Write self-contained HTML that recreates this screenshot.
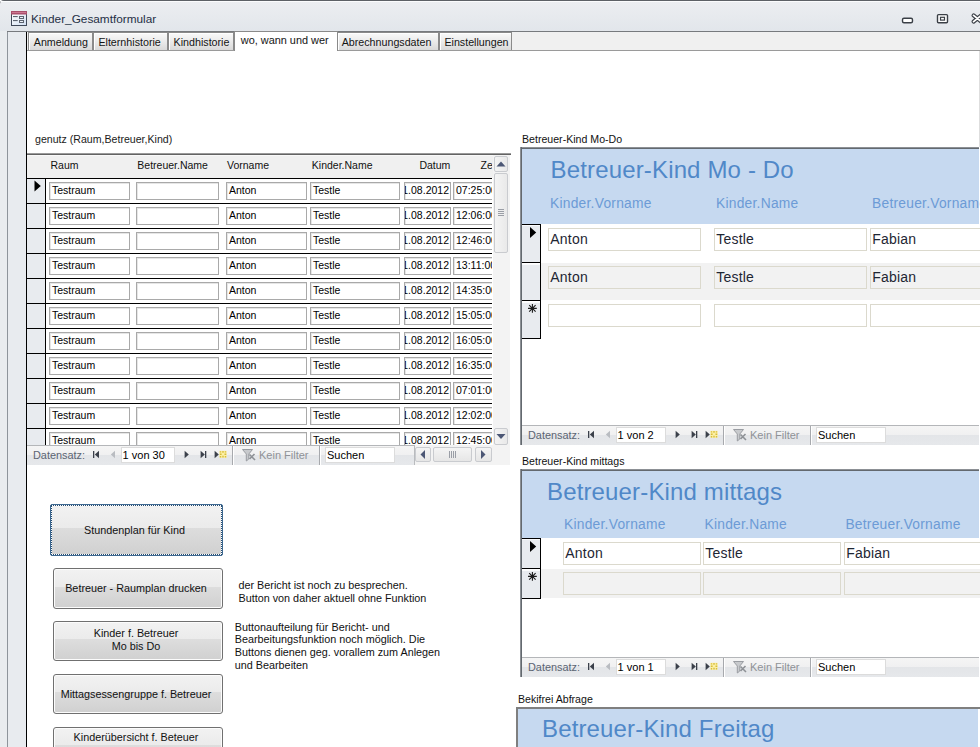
<!DOCTYPE html><html><head><meta charset="utf-8"><style>
html,body{margin:0;padding:0;}
body{width:980px;height:747px;overflow:hidden;position:relative;background:#fff;font-family:"Liberation Sans", sans-serif;}
div{box-sizing:border-box;}
</style></head><body>
<div style="position:absolute;left:0px;top:0px;width:980px;height:31px;background:linear-gradient(#eceef1,#e2e6eb);border-top:1px solid #5d6166;border-top-left-radius:4px;"></div>
<div style="position:absolute;left:1px;top:1px;width:979px;height:1px;background:#fbfcfd;"></div>
<svg style="position:absolute;left:11px;top:11px" width="16" height="15" viewBox="0 0 16 15">
<defs><linearGradient id="ib" x1="0" y1="0" x2="1" y2="1"><stop offset="0" stop-color="#ffffff"/><stop offset="1" stop-color="#d3e0f2"/></linearGradient>
<linearGradient id="ip" x1="0" y1="0" x2="0" y2="1"><stop offset="0" stop-color="#e79ab3"/><stop offset="1" stop-color="#a3415f"/></linearGradient></defs>
<rect x="0.5" y="0.5" width="15" height="14" fill="url(#ib)" stroke="#414a5a"/>
<rect x="0.5" y="0.5" width="15" height="2.5" fill="url(#ip)" stroke="#a8506c" stroke-width="1"/>
<rect x="2" y="5" width="4.7" height="1.1" fill="#5d6470"/>
<rect x="2" y="9" width="4.7" height="1.1" fill="#5d6470"/>
<rect x="8.5" y="5.5" width="4" height="2" fill="#eef3fa" stroke="#5d6470" stroke-width="1"/>
<rect x="8.5" y="9.5" width="4" height="2" fill="#eef3fa" stroke="#5d6470" stroke-width="1"/>
</svg>
<div style="position:absolute;left:31px;top:12px;font-size:11.8px;line-height:11.8px;color:#1f2f45;white-space:pre;line-height:14px;">Kinder_Gesamtformular</div>
<svg style="position:absolute;left:895px;top:8px" width="85" height="20" viewBox="0 0 85 20" style="overflow:hidden">
<rect x="7.5" y="10.3" width="10" height="4.4" rx="1.5" fill="#fff" stroke="#3a3f46" stroke-width="1.4"/>
<rect x="42.5" y="6.6" width="10" height="8.2" rx="1" fill="#fff" stroke="#3a3f46" stroke-width="1.4"/>
<rect x="45.5" y="9.3" width="4" height="2.8" fill="#fff" stroke="#3a3f46" stroke-width="1.2"/>
<path d="M78.6 7.4 L86.2 13.6 M78.6 13.6 L86.2 7.4" stroke="#3a3f46" stroke-width="4" stroke-linecap="round"/>
<path d="M78.6 7.4 L86.2 13.6 M78.6 13.6 L86.2 7.4" stroke="#fff" stroke-width="1.8" stroke-linecap="round"/>
</svg>
<div style="position:absolute;left:7px;top:31px;width:973px;height:1px;background:#777a7e;"></div>
<div style="position:absolute;left:0px;top:31px;width:7px;height:716px;background:#e9ecef;"></div>
<div style="position:absolute;left:7px;top:32px;width:1px;height:715px;background:#8e949b;"></div>
<div style="position:absolute;left:8px;top:32px;width:18px;height:715px;background:#e8ebef;"></div>
<div style="position:absolute;left:26px;top:32px;width:1px;height:715px;background:#000;"></div>
<div style="position:absolute;left:27px;top:32px;width:953px;height:18px;background:#f0f0f0;"></div>
<div style="position:absolute;left:27px;top:50px;width:953px;height:1px;background:#9a9a9a;"></div>
<div style="position:absolute;left:28px;top:32px;width:65px;height:18px;border:1px solid #8a8a8a;border-bottom:none;background:linear-gradient(#f9f9f9,#e9e9e9 55%,#d9d9d9);box-shadow:inset 1px 1px 0 #fff;"></div>
<div style="position:absolute;left:33.8px;top:36.84px;font-size:10.7px;line-height:10.7px;color:#141414;white-space:pre;">Anmeldung</div>
<div style="position:absolute;left:93px;top:32px;width:75px;height:18px;border:1px solid #8a8a8a;border-bottom:none;background:linear-gradient(#f9f9f9,#e9e9e9 55%,#d9d9d9);box-shadow:inset 1px 1px 0 #fff;"></div>
<div style="position:absolute;left:98.4px;top:36.84px;font-size:10.7px;line-height:10.7px;color:#141414;white-space:pre;">Elternhistorie</div>
<div style="position:absolute;left:168px;top:32px;width:66px;height:18px;border:1px solid #8a8a8a;border-bottom:none;background:linear-gradient(#f9f9f9,#e9e9e9 55%,#d9d9d9);box-shadow:inset 1px 1px 0 #fff;"></div>
<div style="position:absolute;left:173.6px;top:36.84px;font-size:10.7px;line-height:10.7px;color:#141414;white-space:pre;">Kindhistorie</div>
<div style="position:absolute;left:337px;top:32px;width:102px;height:18px;border:1px solid #8a8a8a;border-bottom:none;background:linear-gradient(#f9f9f9,#e9e9e9 55%,#d9d9d9);box-shadow:inset 1px 1px 0 #fff;"></div>
<div style="position:absolute;left:341.7px;top:36.84px;font-size:10.7px;line-height:10.7px;color:#141414;white-space:pre;">Abrechnungsdaten</div>
<div style="position:absolute;left:439px;top:32px;width:73px;height:18px;border:1px solid #8a8a8a;border-bottom:none;background:linear-gradient(#f9f9f9,#e9e9e9 55%,#d9d9d9);box-shadow:inset 1px 1px 0 #fff;"></div>
<div style="position:absolute;left:444.4px;top:36.84px;font-size:10.7px;line-height:10.7px;color:#141414;white-space:pre;">Einstellungen</div>
<div style="position:absolute;left:234px;top:31px;width:104px;height:20px;border:1px solid #8a8a8a;border-bottom:none;background:#fff;"></div>
<div style="position:absolute;left:240.8px;top:34.77px;font-size:10.9px;line-height:10.9px;color:#141414;white-space:pre;">wo, wann und wer</div>
<div style="position:absolute;left:35px;top:134.03px;font-size:10.6px;line-height:10.6px;color:#1a1a1a;white-space:pre;">genutz (Raum,Betreuer,Kind)</div>
<div style="position:absolute;left:27px;top:153px;width:484px;height:1px;background:#9a9a9a;"></div>
<div style="position:absolute;left:27px;top:154px;width:484px;height:1px;background:#636363;"></div>
<div style="position:absolute;left:27px;top:155px;width:466px;height:23px;background:#f0f0f0;border-top:1px solid #f9f9f9;"></div>
<div style="position:absolute;left:27px;top:155px;width:465px;height:290px;overflow:hidden;">
<div style="position:absolute;left:23.5px;top:4.81px;font-size:10.5px;line-height:10.5px;color:#111;white-space:pre;">Raum</div>
<div style="position:absolute;left:110.30000000000001px;top:4.81px;font-size:10.5px;line-height:10.5px;color:#111;white-space:pre;">Betreuer.Name</div>
<div style="position:absolute;left:200px;top:4.81px;font-size:10.5px;line-height:10.5px;color:#111;white-space:pre;">Vorname</div>
<div style="position:absolute;left:284.8px;top:4.81px;font-size:10.5px;line-height:10.5px;color:#111;white-space:pre;">Kinder.Name</div>
<div style="position:absolute;left:392.4px;top:4.81px;font-size:10.5px;line-height:10.5px;color:#111;white-space:pre;">Datum</div>
<div style="position:absolute;left:453.6px;top:4.81px;font-size:10.5px;line-height:10.5px;color:#111;white-space:pre;">Zeit</div>
<div style="position:absolute;left:0px;top:23px;width:465px;height:1px;background:#000;"></div>
<div style="position:absolute;left:18px;top:24px;width:447px;height:24px;background:#fff;"></div>
<div style="position:absolute;left:0px;top:24px;width:18px;height:24px;background:#e8ebef;"></div>
<div style="position:absolute;left:18px;top:24px;width:1px;height:24px;background:#000;"></div>
<div style="position:absolute;left:22px;top:27px;width:81px;height:18px;border:1px solid #a9a9a9;box-shadow:inset 1px 1px 0 #e6e6e6;background:#fff;overflow:hidden;">
<div style="position:absolute;left:2px;top:1.81px;font-size:10.5px;line-height:10.5px;color:#000;white-space:pre;">Testraum</div>
</div>
<div style="position:absolute;left:109px;top:27px;width:83px;height:18px;border:1px solid #a9a9a9;box-shadow:inset 1px 1px 0 #e6e6e6;background:#fff;overflow:hidden;">
</div>
<div style="position:absolute;left:199px;top:27px;width:81px;height:18px;border:1px solid #a9a9a9;box-shadow:inset 1px 1px 0 #e6e6e6;background:#fff;overflow:hidden;">
<div style="position:absolute;left:2px;top:1.81px;font-size:10.5px;line-height:10.5px;color:#000;white-space:pre;">Anton</div>
</div>
<div style="position:absolute;left:283px;top:27px;width:90px;height:18px;border:1px solid #a9a9a9;box-shadow:inset 1px 1px 0 #e6e6e6;background:#fff;overflow:hidden;">
<div style="position:absolute;left:2px;top:1.81px;font-size:10.5px;line-height:10.5px;color:#000;white-space:pre;">Testle</div>
</div>
<div style="position:absolute;left:377px;top:27px;width:47px;height:18px;border:1px solid #a9a9a9;box-shadow:inset 1px 1px 0 #e6e6e6;background:#fff;overflow:hidden;">
<div style="position:absolute;right:1px;top:1.81px;font-size:10.5px;line-height:10.5px;color:#000;white-space:pre;">01.08.2012</div>
</div>
<div style="position:absolute;left:426px;top:27px;width:68px;height:18px;border:1px solid #a9a9a9;box-shadow:inset 1px 1px 0 #e6e6e6;background:#fff;overflow:hidden;">
<div style="position:absolute;left:2px;top:1.81px;font-size:10.5px;line-height:10.5px;color:#000;white-space:pre;">07:25:00</div>
</div>
<div style="position:absolute;left:0px;top:48px;width:465px;height:1px;background:#000;"></div>
<div style="position:absolute;left:18px;top:49px;width:447px;height:24px;background:#fff;"></div>
<div style="position:absolute;left:0px;top:49px;width:18px;height:24px;background:#e8ebef;"></div>
<div style="position:absolute;left:18px;top:49px;width:1px;height:24px;background:#000;"></div>
<div style="position:absolute;left:22px;top:52px;width:81px;height:18px;border:1px solid #a9a9a9;box-shadow:inset 1px 1px 0 #e6e6e6;background:#fff;overflow:hidden;">
<div style="position:absolute;left:2px;top:1.81px;font-size:10.5px;line-height:10.5px;color:#000;white-space:pre;">Testraum</div>
</div>
<div style="position:absolute;left:109px;top:52px;width:83px;height:18px;border:1px solid #a9a9a9;box-shadow:inset 1px 1px 0 #e6e6e6;background:#fff;overflow:hidden;">
</div>
<div style="position:absolute;left:199px;top:52px;width:81px;height:18px;border:1px solid #a9a9a9;box-shadow:inset 1px 1px 0 #e6e6e6;background:#fff;overflow:hidden;">
<div style="position:absolute;left:2px;top:1.81px;font-size:10.5px;line-height:10.5px;color:#000;white-space:pre;">Anton</div>
</div>
<div style="position:absolute;left:283px;top:52px;width:90px;height:18px;border:1px solid #a9a9a9;box-shadow:inset 1px 1px 0 #e6e6e6;background:#fff;overflow:hidden;">
<div style="position:absolute;left:2px;top:1.81px;font-size:10.5px;line-height:10.5px;color:#000;white-space:pre;">Testle</div>
</div>
<div style="position:absolute;left:377px;top:52px;width:47px;height:18px;border:1px solid #a9a9a9;box-shadow:inset 1px 1px 0 #e6e6e6;background:#fff;overflow:hidden;">
<div style="position:absolute;right:1px;top:1.81px;font-size:10.5px;line-height:10.5px;color:#000;white-space:pre;">01.08.2012</div>
</div>
<div style="position:absolute;left:426px;top:52px;width:68px;height:18px;border:1px solid #a9a9a9;box-shadow:inset 1px 1px 0 #e6e6e6;background:#fff;overflow:hidden;">
<div style="position:absolute;left:2px;top:1.81px;font-size:10.5px;line-height:10.5px;color:#000;white-space:pre;">12:06:00</div>
</div>
<div style="position:absolute;left:0px;top:73px;width:465px;height:1px;background:#000;"></div>
<div style="position:absolute;left:18px;top:74px;width:447px;height:24px;background:#fff;"></div>
<div style="position:absolute;left:0px;top:74px;width:18px;height:24px;background:#e8ebef;"></div>
<div style="position:absolute;left:18px;top:74px;width:1px;height:24px;background:#000;"></div>
<div style="position:absolute;left:22px;top:77px;width:81px;height:18px;border:1px solid #a9a9a9;box-shadow:inset 1px 1px 0 #e6e6e6;background:#fff;overflow:hidden;">
<div style="position:absolute;left:2px;top:1.81px;font-size:10.5px;line-height:10.5px;color:#000;white-space:pre;">Testraum</div>
</div>
<div style="position:absolute;left:109px;top:77px;width:83px;height:18px;border:1px solid #a9a9a9;box-shadow:inset 1px 1px 0 #e6e6e6;background:#fff;overflow:hidden;">
</div>
<div style="position:absolute;left:199px;top:77px;width:81px;height:18px;border:1px solid #a9a9a9;box-shadow:inset 1px 1px 0 #e6e6e6;background:#fff;overflow:hidden;">
<div style="position:absolute;left:2px;top:1.81px;font-size:10.5px;line-height:10.5px;color:#000;white-space:pre;">Anton</div>
</div>
<div style="position:absolute;left:283px;top:77px;width:90px;height:18px;border:1px solid #a9a9a9;box-shadow:inset 1px 1px 0 #e6e6e6;background:#fff;overflow:hidden;">
<div style="position:absolute;left:2px;top:1.81px;font-size:10.5px;line-height:10.5px;color:#000;white-space:pre;">Testle</div>
</div>
<div style="position:absolute;left:377px;top:77px;width:47px;height:18px;border:1px solid #a9a9a9;box-shadow:inset 1px 1px 0 #e6e6e6;background:#fff;overflow:hidden;">
<div style="position:absolute;right:1px;top:1.81px;font-size:10.5px;line-height:10.5px;color:#000;white-space:pre;">01.08.2012</div>
</div>
<div style="position:absolute;left:426px;top:77px;width:68px;height:18px;border:1px solid #a9a9a9;box-shadow:inset 1px 1px 0 #e6e6e6;background:#fff;overflow:hidden;">
<div style="position:absolute;left:2px;top:1.81px;font-size:10.5px;line-height:10.5px;color:#000;white-space:pre;">12:46:00</div>
</div>
<div style="position:absolute;left:0px;top:98px;width:465px;height:1px;background:#000;"></div>
<div style="position:absolute;left:18px;top:99px;width:447px;height:24px;background:#fff;"></div>
<div style="position:absolute;left:0px;top:99px;width:18px;height:24px;background:#e8ebef;"></div>
<div style="position:absolute;left:18px;top:99px;width:1px;height:24px;background:#000;"></div>
<div style="position:absolute;left:22px;top:102px;width:81px;height:18px;border:1px solid #a9a9a9;box-shadow:inset 1px 1px 0 #e6e6e6;background:#fff;overflow:hidden;">
<div style="position:absolute;left:2px;top:1.81px;font-size:10.5px;line-height:10.5px;color:#000;white-space:pre;">Testraum</div>
</div>
<div style="position:absolute;left:109px;top:102px;width:83px;height:18px;border:1px solid #a9a9a9;box-shadow:inset 1px 1px 0 #e6e6e6;background:#fff;overflow:hidden;">
</div>
<div style="position:absolute;left:199px;top:102px;width:81px;height:18px;border:1px solid #a9a9a9;box-shadow:inset 1px 1px 0 #e6e6e6;background:#fff;overflow:hidden;">
<div style="position:absolute;left:2px;top:1.81px;font-size:10.5px;line-height:10.5px;color:#000;white-space:pre;">Anton</div>
</div>
<div style="position:absolute;left:283px;top:102px;width:90px;height:18px;border:1px solid #a9a9a9;box-shadow:inset 1px 1px 0 #e6e6e6;background:#fff;overflow:hidden;">
<div style="position:absolute;left:2px;top:1.81px;font-size:10.5px;line-height:10.5px;color:#000;white-space:pre;">Testle</div>
</div>
<div style="position:absolute;left:377px;top:102px;width:47px;height:18px;border:1px solid #a9a9a9;box-shadow:inset 1px 1px 0 #e6e6e6;background:#fff;overflow:hidden;">
<div style="position:absolute;right:1px;top:1.81px;font-size:10.5px;line-height:10.5px;color:#000;white-space:pre;">01.08.2012</div>
</div>
<div style="position:absolute;left:426px;top:102px;width:68px;height:18px;border:1px solid #a9a9a9;box-shadow:inset 1px 1px 0 #e6e6e6;background:#fff;overflow:hidden;">
<div style="position:absolute;left:2px;top:1.81px;font-size:10.5px;line-height:10.5px;color:#000;white-space:pre;">13:11:00</div>
</div>
<div style="position:absolute;left:0px;top:123px;width:465px;height:1px;background:#000;"></div>
<div style="position:absolute;left:18px;top:124px;width:447px;height:24px;background:#fff;"></div>
<div style="position:absolute;left:0px;top:124px;width:18px;height:24px;background:#e8ebef;"></div>
<div style="position:absolute;left:18px;top:124px;width:1px;height:24px;background:#000;"></div>
<div style="position:absolute;left:22px;top:127px;width:81px;height:18px;border:1px solid #a9a9a9;box-shadow:inset 1px 1px 0 #e6e6e6;background:#fff;overflow:hidden;">
<div style="position:absolute;left:2px;top:1.81px;font-size:10.5px;line-height:10.5px;color:#000;white-space:pre;">Testraum</div>
</div>
<div style="position:absolute;left:109px;top:127px;width:83px;height:18px;border:1px solid #a9a9a9;box-shadow:inset 1px 1px 0 #e6e6e6;background:#fff;overflow:hidden;">
</div>
<div style="position:absolute;left:199px;top:127px;width:81px;height:18px;border:1px solid #a9a9a9;box-shadow:inset 1px 1px 0 #e6e6e6;background:#fff;overflow:hidden;">
<div style="position:absolute;left:2px;top:1.81px;font-size:10.5px;line-height:10.5px;color:#000;white-space:pre;">Anton</div>
</div>
<div style="position:absolute;left:283px;top:127px;width:90px;height:18px;border:1px solid #a9a9a9;box-shadow:inset 1px 1px 0 #e6e6e6;background:#fff;overflow:hidden;">
<div style="position:absolute;left:2px;top:1.81px;font-size:10.5px;line-height:10.5px;color:#000;white-space:pre;">Testle</div>
</div>
<div style="position:absolute;left:377px;top:127px;width:47px;height:18px;border:1px solid #a9a9a9;box-shadow:inset 1px 1px 0 #e6e6e6;background:#fff;overflow:hidden;">
<div style="position:absolute;right:1px;top:1.81px;font-size:10.5px;line-height:10.5px;color:#000;white-space:pre;">01.08.2012</div>
</div>
<div style="position:absolute;left:426px;top:127px;width:68px;height:18px;border:1px solid #a9a9a9;box-shadow:inset 1px 1px 0 #e6e6e6;background:#fff;overflow:hidden;">
<div style="position:absolute;left:2px;top:1.81px;font-size:10.5px;line-height:10.5px;color:#000;white-space:pre;">14:35:00</div>
</div>
<div style="position:absolute;left:0px;top:148px;width:465px;height:1px;background:#000;"></div>
<div style="position:absolute;left:18px;top:149px;width:447px;height:24px;background:#fff;"></div>
<div style="position:absolute;left:0px;top:149px;width:18px;height:24px;background:#e8ebef;"></div>
<div style="position:absolute;left:18px;top:149px;width:1px;height:24px;background:#000;"></div>
<div style="position:absolute;left:22px;top:152px;width:81px;height:18px;border:1px solid #a9a9a9;box-shadow:inset 1px 1px 0 #e6e6e6;background:#fff;overflow:hidden;">
<div style="position:absolute;left:2px;top:1.81px;font-size:10.5px;line-height:10.5px;color:#000;white-space:pre;">Testraum</div>
</div>
<div style="position:absolute;left:109px;top:152px;width:83px;height:18px;border:1px solid #a9a9a9;box-shadow:inset 1px 1px 0 #e6e6e6;background:#fff;overflow:hidden;">
</div>
<div style="position:absolute;left:199px;top:152px;width:81px;height:18px;border:1px solid #a9a9a9;box-shadow:inset 1px 1px 0 #e6e6e6;background:#fff;overflow:hidden;">
<div style="position:absolute;left:2px;top:1.81px;font-size:10.5px;line-height:10.5px;color:#000;white-space:pre;">Anton</div>
</div>
<div style="position:absolute;left:283px;top:152px;width:90px;height:18px;border:1px solid #a9a9a9;box-shadow:inset 1px 1px 0 #e6e6e6;background:#fff;overflow:hidden;">
<div style="position:absolute;left:2px;top:1.81px;font-size:10.5px;line-height:10.5px;color:#000;white-space:pre;">Testle</div>
</div>
<div style="position:absolute;left:377px;top:152px;width:47px;height:18px;border:1px solid #a9a9a9;box-shadow:inset 1px 1px 0 #e6e6e6;background:#fff;overflow:hidden;">
<div style="position:absolute;right:1px;top:1.81px;font-size:10.5px;line-height:10.5px;color:#000;white-space:pre;">01.08.2012</div>
</div>
<div style="position:absolute;left:426px;top:152px;width:68px;height:18px;border:1px solid #a9a9a9;box-shadow:inset 1px 1px 0 #e6e6e6;background:#fff;overflow:hidden;">
<div style="position:absolute;left:2px;top:1.81px;font-size:10.5px;line-height:10.5px;color:#000;white-space:pre;">15:05:00</div>
</div>
<div style="position:absolute;left:0px;top:173px;width:465px;height:1px;background:#000;"></div>
<div style="position:absolute;left:18px;top:174px;width:447px;height:24px;background:#fff;"></div>
<div style="position:absolute;left:0px;top:174px;width:18px;height:24px;background:#e8ebef;"></div>
<div style="position:absolute;left:18px;top:174px;width:1px;height:24px;background:#000;"></div>
<div style="position:absolute;left:22px;top:177px;width:81px;height:18px;border:1px solid #a9a9a9;box-shadow:inset 1px 1px 0 #e6e6e6;background:#fff;overflow:hidden;">
<div style="position:absolute;left:2px;top:1.81px;font-size:10.5px;line-height:10.5px;color:#000;white-space:pre;">Testraum</div>
</div>
<div style="position:absolute;left:109px;top:177px;width:83px;height:18px;border:1px solid #a9a9a9;box-shadow:inset 1px 1px 0 #e6e6e6;background:#fff;overflow:hidden;">
</div>
<div style="position:absolute;left:199px;top:177px;width:81px;height:18px;border:1px solid #a9a9a9;box-shadow:inset 1px 1px 0 #e6e6e6;background:#fff;overflow:hidden;">
<div style="position:absolute;left:2px;top:1.81px;font-size:10.5px;line-height:10.5px;color:#000;white-space:pre;">Anton</div>
</div>
<div style="position:absolute;left:283px;top:177px;width:90px;height:18px;border:1px solid #a9a9a9;box-shadow:inset 1px 1px 0 #e6e6e6;background:#fff;overflow:hidden;">
<div style="position:absolute;left:2px;top:1.81px;font-size:10.5px;line-height:10.5px;color:#000;white-space:pre;">Testle</div>
</div>
<div style="position:absolute;left:377px;top:177px;width:47px;height:18px;border:1px solid #a9a9a9;box-shadow:inset 1px 1px 0 #e6e6e6;background:#fff;overflow:hidden;">
<div style="position:absolute;right:1px;top:1.81px;font-size:10.5px;line-height:10.5px;color:#000;white-space:pre;">01.08.2012</div>
</div>
<div style="position:absolute;left:426px;top:177px;width:68px;height:18px;border:1px solid #a9a9a9;box-shadow:inset 1px 1px 0 #e6e6e6;background:#fff;overflow:hidden;">
<div style="position:absolute;left:2px;top:1.81px;font-size:10.5px;line-height:10.5px;color:#000;white-space:pre;">16:05:00</div>
</div>
<div style="position:absolute;left:0px;top:198px;width:465px;height:1px;background:#000;"></div>
<div style="position:absolute;left:18px;top:199px;width:447px;height:24px;background:#fff;"></div>
<div style="position:absolute;left:0px;top:199px;width:18px;height:24px;background:#e8ebef;"></div>
<div style="position:absolute;left:18px;top:199px;width:1px;height:24px;background:#000;"></div>
<div style="position:absolute;left:22px;top:202px;width:81px;height:18px;border:1px solid #a9a9a9;box-shadow:inset 1px 1px 0 #e6e6e6;background:#fff;overflow:hidden;">
<div style="position:absolute;left:2px;top:1.81px;font-size:10.5px;line-height:10.5px;color:#000;white-space:pre;">Testraum</div>
</div>
<div style="position:absolute;left:109px;top:202px;width:83px;height:18px;border:1px solid #a9a9a9;box-shadow:inset 1px 1px 0 #e6e6e6;background:#fff;overflow:hidden;">
</div>
<div style="position:absolute;left:199px;top:202px;width:81px;height:18px;border:1px solid #a9a9a9;box-shadow:inset 1px 1px 0 #e6e6e6;background:#fff;overflow:hidden;">
<div style="position:absolute;left:2px;top:1.81px;font-size:10.5px;line-height:10.5px;color:#000;white-space:pre;">Anton</div>
</div>
<div style="position:absolute;left:283px;top:202px;width:90px;height:18px;border:1px solid #a9a9a9;box-shadow:inset 1px 1px 0 #e6e6e6;background:#fff;overflow:hidden;">
<div style="position:absolute;left:2px;top:1.81px;font-size:10.5px;line-height:10.5px;color:#000;white-space:pre;">Testle</div>
</div>
<div style="position:absolute;left:377px;top:202px;width:47px;height:18px;border:1px solid #a9a9a9;box-shadow:inset 1px 1px 0 #e6e6e6;background:#fff;overflow:hidden;">
<div style="position:absolute;right:1px;top:1.81px;font-size:10.5px;line-height:10.5px;color:#000;white-space:pre;">01.08.2012</div>
</div>
<div style="position:absolute;left:426px;top:202px;width:68px;height:18px;border:1px solid #a9a9a9;box-shadow:inset 1px 1px 0 #e6e6e6;background:#fff;overflow:hidden;">
<div style="position:absolute;left:2px;top:1.81px;font-size:10.5px;line-height:10.5px;color:#000;white-space:pre;">16:35:00</div>
</div>
<div style="position:absolute;left:0px;top:223px;width:465px;height:1px;background:#000;"></div>
<div style="position:absolute;left:18px;top:224px;width:447px;height:24px;background:#fff;"></div>
<div style="position:absolute;left:0px;top:224px;width:18px;height:24px;background:#e8ebef;"></div>
<div style="position:absolute;left:18px;top:224px;width:1px;height:24px;background:#000;"></div>
<div style="position:absolute;left:22px;top:227px;width:81px;height:18px;border:1px solid #a9a9a9;box-shadow:inset 1px 1px 0 #e6e6e6;background:#fff;overflow:hidden;">
<div style="position:absolute;left:2px;top:1.81px;font-size:10.5px;line-height:10.5px;color:#000;white-space:pre;">Testraum</div>
</div>
<div style="position:absolute;left:109px;top:227px;width:83px;height:18px;border:1px solid #a9a9a9;box-shadow:inset 1px 1px 0 #e6e6e6;background:#fff;overflow:hidden;">
</div>
<div style="position:absolute;left:199px;top:227px;width:81px;height:18px;border:1px solid #a9a9a9;box-shadow:inset 1px 1px 0 #e6e6e6;background:#fff;overflow:hidden;">
<div style="position:absolute;left:2px;top:1.81px;font-size:10.5px;line-height:10.5px;color:#000;white-space:pre;">Anton</div>
</div>
<div style="position:absolute;left:283px;top:227px;width:90px;height:18px;border:1px solid #a9a9a9;box-shadow:inset 1px 1px 0 #e6e6e6;background:#fff;overflow:hidden;">
<div style="position:absolute;left:2px;top:1.81px;font-size:10.5px;line-height:10.5px;color:#000;white-space:pre;">Testle</div>
</div>
<div style="position:absolute;left:377px;top:227px;width:47px;height:18px;border:1px solid #a9a9a9;box-shadow:inset 1px 1px 0 #e6e6e6;background:#fff;overflow:hidden;">
<div style="position:absolute;right:1px;top:1.81px;font-size:10.5px;line-height:10.5px;color:#000;white-space:pre;">01.08.2012</div>
</div>
<div style="position:absolute;left:426px;top:227px;width:68px;height:18px;border:1px solid #a9a9a9;box-shadow:inset 1px 1px 0 #e6e6e6;background:#fff;overflow:hidden;">
<div style="position:absolute;left:2px;top:1.81px;font-size:10.5px;line-height:10.5px;color:#000;white-space:pre;">07:01:00</div>
</div>
<div style="position:absolute;left:0px;top:248px;width:465px;height:1px;background:#000;"></div>
<div style="position:absolute;left:18px;top:249px;width:447px;height:24px;background:#fff;"></div>
<div style="position:absolute;left:0px;top:249px;width:18px;height:24px;background:#e8ebef;"></div>
<div style="position:absolute;left:18px;top:249px;width:1px;height:24px;background:#000;"></div>
<div style="position:absolute;left:22px;top:252px;width:81px;height:18px;border:1px solid #a9a9a9;box-shadow:inset 1px 1px 0 #e6e6e6;background:#fff;overflow:hidden;">
<div style="position:absolute;left:2px;top:1.81px;font-size:10.5px;line-height:10.5px;color:#000;white-space:pre;">Testraum</div>
</div>
<div style="position:absolute;left:109px;top:252px;width:83px;height:18px;border:1px solid #a9a9a9;box-shadow:inset 1px 1px 0 #e6e6e6;background:#fff;overflow:hidden;">
</div>
<div style="position:absolute;left:199px;top:252px;width:81px;height:18px;border:1px solid #a9a9a9;box-shadow:inset 1px 1px 0 #e6e6e6;background:#fff;overflow:hidden;">
<div style="position:absolute;left:2px;top:1.81px;font-size:10.5px;line-height:10.5px;color:#000;white-space:pre;">Anton</div>
</div>
<div style="position:absolute;left:283px;top:252px;width:90px;height:18px;border:1px solid #a9a9a9;box-shadow:inset 1px 1px 0 #e6e6e6;background:#fff;overflow:hidden;">
<div style="position:absolute;left:2px;top:1.81px;font-size:10.5px;line-height:10.5px;color:#000;white-space:pre;">Testle</div>
</div>
<div style="position:absolute;left:377px;top:252px;width:47px;height:18px;border:1px solid #a9a9a9;box-shadow:inset 1px 1px 0 #e6e6e6;background:#fff;overflow:hidden;">
<div style="position:absolute;right:1px;top:1.81px;font-size:10.5px;line-height:10.5px;color:#000;white-space:pre;">01.08.2012</div>
</div>
<div style="position:absolute;left:426px;top:252px;width:68px;height:18px;border:1px solid #a9a9a9;box-shadow:inset 1px 1px 0 #e6e6e6;background:#fff;overflow:hidden;">
<div style="position:absolute;left:2px;top:1.81px;font-size:10.5px;line-height:10.5px;color:#000;white-space:pre;">12:02:00</div>
</div>
<div style="position:absolute;left:0px;top:273px;width:465px;height:1px;background:#000;"></div>
<div style="position:absolute;left:18px;top:274px;width:447px;height:24px;background:#fff;"></div>
<div style="position:absolute;left:0px;top:274px;width:18px;height:24px;background:#e8ebef;"></div>
<div style="position:absolute;left:18px;top:274px;width:1px;height:24px;background:#000;"></div>
<div style="position:absolute;left:22px;top:277px;width:81px;height:18px;border:1px solid #a9a9a9;box-shadow:inset 1px 1px 0 #e6e6e6;background:#fff;overflow:hidden;">
<div style="position:absolute;left:2px;top:1.81px;font-size:10.5px;line-height:10.5px;color:#000;white-space:pre;">Testraum</div>
</div>
<div style="position:absolute;left:109px;top:277px;width:83px;height:18px;border:1px solid #a9a9a9;box-shadow:inset 1px 1px 0 #e6e6e6;background:#fff;overflow:hidden;">
</div>
<div style="position:absolute;left:199px;top:277px;width:81px;height:18px;border:1px solid #a9a9a9;box-shadow:inset 1px 1px 0 #e6e6e6;background:#fff;overflow:hidden;">
<div style="position:absolute;left:2px;top:1.81px;font-size:10.5px;line-height:10.5px;color:#000;white-space:pre;">Anton</div>
</div>
<div style="position:absolute;left:283px;top:277px;width:90px;height:18px;border:1px solid #a9a9a9;box-shadow:inset 1px 1px 0 #e6e6e6;background:#fff;overflow:hidden;">
<div style="position:absolute;left:2px;top:1.81px;font-size:10.5px;line-height:10.5px;color:#000;white-space:pre;">Testle</div>
</div>
<div style="position:absolute;left:377px;top:277px;width:47px;height:18px;border:1px solid #a9a9a9;box-shadow:inset 1px 1px 0 #e6e6e6;background:#fff;overflow:hidden;">
<div style="position:absolute;right:1px;top:1.81px;font-size:10.5px;line-height:10.5px;color:#000;white-space:pre;">01.08.2012</div>
</div>
<div style="position:absolute;left:426px;top:277px;width:68px;height:18px;border:1px solid #a9a9a9;box-shadow:inset 1px 1px 0 #e6e6e6;background:#fff;overflow:hidden;">
<div style="position:absolute;left:2px;top:1.81px;font-size:10.5px;line-height:10.5px;color:#000;white-space:pre;">12:45:00</div>
</div>
<svg style="position:absolute;left:7px;top:25px" width="8" height="12"><path d="M0.5 0.5 L6.8 6 L0.5 11.5Z" fill="#000"/></svg>
</div>
<div style="position:absolute;left:493px;top:155px;width:17px;height:290px;background:#f3f3f3;"></div>
<div style="position:absolute;left:494px;top:156px;width:14px;height:16px;border:1px solid #c9cbcf;border-radius:2px;background:linear-gradient(90deg,#f4f4f4,#e9e9e9);"></div>
<svg style="position:absolute;left:494px;top:156px" width="14" height="16"><path d="M2.5 10.5 L7 5.5 L11.5 10.5Z" fill="#4c5775"/></svg>
<div style="position:absolute;left:494px;top:173px;width:14px;height:80px;border:1px solid #c9cbcf;border-radius:2px;background:linear-gradient(90deg,#f4f4f4,#e9e9e9);"></div>
<svg style="position:absolute;left:494px;top:173px" width="14" height="80"><path d="M4 36.5h6M4 38.5h6M4 40.5h6M4 42.5h6" stroke="#9a9ea6" stroke-width="1"/></svg>
<div style="position:absolute;left:494px;top:428px;width:14px;height:17px;border:1px solid #c9cbcf;border-radius:2px;background:linear-gradient(90deg,#f4f4f4,#e9e9e9);"></div>
<svg style="position:absolute;left:494px;top:428px" width="14" height="17"><path d="M2.5 6 L7 11 L11.5 6Z" fill="#4c5775"/></svg>
<div style="position:absolute;left:415px;top:445px;width:95px;height:20px;background:#f3f3f3;"></div>
<div style="position:absolute;left:27px;top:445px;width:388px;height:20px;background:linear-gradient(#f5f5f5 0%,#f0f0f1 46%,#e3e5e8 47%,#e6e8eb 100%);border-top:1px solid #b4b6b9;"></div>
<div style="position:absolute;left:33px;top:449.97px;font-size:10.9px;line-height:10.9px;color:#5b6472;white-space:pre;">Datensatz:</div>
<svg style="position:absolute;left:92px;top:450px" width="16" height="12" viewBox="0 0 16 12"><rect x="1" y="1" width="1.3" height="7" fill="#3b404a"/><path d="M7 0.8 L2.8 4.5 L7 8.2Z" fill="#3b404a"/></svg>
<svg style="position:absolute;left:110px;top:450px" width="16" height="12" viewBox="0 0 16 12"><path d="M5 0.8 L0.8 4.5 L5 8.2Z" fill="#b9bcc1"/></svg>
<div style="position:absolute;left:121px;top:447px;width:54px;height:16px;background:#fff;border:1px solid #dcdcdc;"></div>
<div style="position:absolute;left:122.6px;top:450.09px;font-size:11px;line-height:11px;color:#000;white-space:pre;">1 von 30</div>
<svg style="position:absolute;left:184.0px;top:450px" width="16" height="12" viewBox="0 0 16 12"><path d="M0.6 0.8 L4.8 4.5 L0.6 8.2Z" fill="#3b404a"/></svg>
<svg style="position:absolute;left:200.0px;top:450px" width="16" height="12" viewBox="0 0 16 12"><path d="M0.6 0.8 L4.8 4.5 L0.6 8.2Z" fill="#3b404a"/><rect x="5" y="1" width="1.3" height="7" fill="#3b404a"/></svg>
<svg style="position:absolute;left:214.0px;top:450px" width="16" height="12" viewBox="0 0 16 12"><path d="M0.6 0.8 L4.8 4.5 L0.6 8.2Z" fill="#3b404a"/><rect x="5.4" y="0.8" width="7.2" height="7" fill="#fcf0a6"/><path d="M5.8 1.2h1.4v1.4h-1.4zM8.3 1.0h1.4v1.8h-1.4zM10.8 1.2h1.4v1.4h-1.4zM5.8 3.6h1.8v1.4h-1.8zM10.5 3.6h1.8v1.4h-1.8zM5.8 6.0h1.4v1.4h-1.4zM8.3 5.8h1.4v1.8h-1.4zM10.8 6.0h1.4v1.4h-1.4z" fill="#d8bc3a"/></svg>
<div style="position:absolute;left:232.2px;top:446px;width:1px;height:19px;background:#a7a9ad;box-shadow:1px 0 0 #fff;"></div>
<svg style="position:absolute;left:241.6px;top:449px" width="15" height="13" viewBox="0 0 15 13"><path d="M0.5 0.5 H10.5 L6.8 5 V10 L4.3 12 V5Z" fill="#c8cacd" stroke="#9a9da2" stroke-width="1"/><path d="M7.5 5.5 L13 11 M12.5 5 L7.5 10" stroke="#8e9196" stroke-width="1.6"/></svg>
<div style="position:absolute;left:259.0px;top:450.09px;font-size:11px;line-height:11px;color:#8f9297;white-space:pre;">Kein Filter</div>
<div style="position:absolute;left:319.0px;top:446px;width:1px;height:19px;background:#a7a9ad;box-shadow:1px 0 0 #fff;"></div>
<div style="position:absolute;left:325.0px;top:447px;width:70px;height:16px;background:#fff;border:1px solid #dcdcdc;"></div>
<div style="position:absolute;left:327.0px;top:450.09px;font-size:11px;line-height:11px;color:#000;white-space:pre;">Suchen</div>
<div style="position:absolute;left:414px;top:445px;width:1px;height:20px;background:#b9bbbe;"></div>
<div style="position:absolute;left:415px;top:447px;width:16px;height:15px;border:1px solid #c9cbcf;border-radius:2px;background:linear-gradient(#f4f4f4,#e6e6e6);"></div>
<svg style="position:absolute;left:415px;top:447px" width="16" height="15"><path d="M10 3 L5.5 7.5 L10 12Z" fill="#4c5775"/></svg>
<div style="position:absolute;left:433px;top:447px;width:39px;height:15px;border:1px solid #c9cbcf;border-radius:2px;background:linear-gradient(#f4f4f4,#e6e6e6);"></div>
<svg style="position:absolute;left:433px;top:447px" width="39" height="15"><path d="M16.5 4v7M18.5 4v7M20.5 4v7M22.5 4v7" stroke="#9a9ea6" stroke-width="1"/></svg>
<div style="position:absolute;left:475px;top:447px;width:17px;height:15px;border:1px solid #c9cbcf;border-radius:2px;background:linear-gradient(#f4f4f4,#e6e6e6);"></div>
<svg style="position:absolute;left:475px;top:447px" width="17" height="15"><path d="M6 3 L10.5 7.5 L6 12Z" fill="#4c5775"/></svg>
<div style="position:absolute;left:50px;top:504px;width:173px;height:52px;border:1px solid #3c7fb1;border-radius:3px;background:linear-gradient(#eaf6fd 0%,#d9f0fc 50%,#bee6fd 51%,#a7d9f5 100%);box-shadow:inset 0 0 0 1px #fff;"></div>
<div style="position:absolute;left:50px;top:504px;width:173px;height:52px;border:1px solid #3d6890;border-radius:2px;background:linear-gradient(#f2f2f2 0%,#ebebeb 45%,#dddddd 46%,#d0d0d0 100%);box-shadow:inset 0 0 0 1px #fff;"></div>
<div style="position:absolute;left:51px;top:505px;width:171px;height:50px;border:1px dotted #274c70;"></div>
<div style="position:absolute;left:48px;width:173px;top:524.96px;text-align:center;font-size:10.8px;line-height:10.8px;color:#111;white-space:pre;">Stundenplan für Kind</div>
<div style="position:absolute;left:53px;top:568px;width:170px;height:41px;border:1px solid #707070;border-radius:3px;background:linear-gradient(#f2f2f2 0%,#ebebeb 45%,#dddddd 46%,#d0d0d0 100%);box-shadow:inset 0 0 0 1px #fcfcfc;"></div>
<div style="position:absolute;left:51px;width:170px;top:582.56px;text-align:center;font-size:10.8px;line-height:10.8px;color:#111;white-space:pre;">Betreuer - Raumplan drucken</div>
<div style="position:absolute;left:53px;top:621px;width:170px;height:40px;border:1px solid #707070;border-radius:3px;background:linear-gradient(#f2f2f2 0%,#ebebeb 45%,#dddddd 46%,#d0d0d0 100%);box-shadow:inset 0 0 0 1px #fcfcfc;"></div>
<div style="position:absolute;left:51px;width:170px;top:628.36px;text-align:center;font-size:10.8px;line-height:10.8px;color:#111;white-space:pre;">Kinder f. Betreuer</div>
<div style="position:absolute;left:51px;width:170px;top:641.26px;text-align:center;font-size:10.8px;line-height:10.8px;color:#111;white-space:pre;">Mo bis Do</div>
<div style="position:absolute;left:53px;top:674px;width:170px;height:40px;border:1px solid #707070;border-radius:3px;background:linear-gradient(#f2f2f2 0%,#ebebeb 45%,#dddddd 46%,#d0d0d0 100%);box-shadow:inset 0 0 0 1px #fcfcfc;"></div>
<div style="position:absolute;left:51px;width:170px;top:688.56px;text-align:center;font-size:10.8px;line-height:10.8px;color:#111;white-space:pre;">Mittagsessengruppe f. Betreuer</div>
<div style="position:absolute;left:53px;top:727px;width:170px;height:40px;border:1px solid #707070;border-radius:3px;background:linear-gradient(#f2f2f2 0%,#ebebeb 45%,#dddddd 46%,#d0d0d0 100%);box-shadow:inset 0 0 0 1px #fcfcfc;"></div>
<div style="position:absolute;left:51px;width:170px;top:731.96px;text-align:center;font-size:10.8px;line-height:10.8px;color:#111;white-space:pre;">Kinderübersicht f. Beteuer</div>
<div style="position:absolute;left:238.5px;top:579.96px;font-size:10.8px;line-height:10.8px;color:#111;white-space:pre;">der Bericht ist noch zu besprechen.</div>
<div style="position:absolute;left:238.5px;top:592.76px;font-size:10.8px;line-height:10.8px;color:#111;white-space:pre;">Button von daher aktuell ohne Funktion</div>
<div style="position:absolute;left:234.8px;top:621.56px;font-size:10.8px;line-height:10.8px;color:#111;white-space:pre;">Buttonaufteilung für Bericht- und</div>
<div style="position:absolute;left:234.8px;top:634.41px;font-size:10.8px;line-height:10.8px;color:#111;white-space:pre;">Bearbeitungsfunktion noch möglich. Die</div>
<div style="position:absolute;left:234.8px;top:647.26px;font-size:10.8px;line-height:10.8px;color:#111;white-space:pre;">Buttons dienen geg. vorallem zum Anlegen</div>
<div style="position:absolute;left:234.8px;top:660.11px;font-size:10.8px;line-height:10.8px;color:#111;white-space:pre;">und Bearbeiten</div>
<div style="position:absolute;left:522px;top:134.03px;font-size:10.6px;line-height:10.6px;color:#111;white-space:pre;">Betreuer-Kind Mo-Do</div>
<div style="position:absolute;left:520px;top:147px;width:459px;height:2px;background:#63696f;border-top:1px solid #8c9095;"></div>
<div style="position:absolute;left:520px;top:147px;width:2px;height:298px;background:#63696f;border-left:1px solid #8c9095;"></div>
<div style="position:absolute;left:522px;top:149px;width:457px;height:75px;background:#c6d9f0;"></div>
<div style="position:absolute;left:979px;top:149px;width:1px;height:75px;background:#fff;"></div>
<div style="position:absolute;left:550.6px;top:157.68px;font-size:24px;line-height:24px;color:#5088c8;white-space:pre;letter-spacing:0.15px;">Betreuer-Kind Mo - Do</div>
<div style="position:absolute;left:550px;top:197.42px;font-size:13.8px;line-height:13.8px;color:#6c9bd6;white-space:pre;letter-spacing:0.25px;">Kinder.Vorname</div>
<div style="position:absolute;left:716px;top:197.42px;font-size:13.8px;line-height:13.8px;color:#6c9bd6;white-space:pre;letter-spacing:0.25px;">Kinder.Name</div>
<div style="position:absolute;left:872px;top:197.42px;font-size:13.8px;line-height:13.8px;color:#6c9bd6;white-space:pre;letter-spacing:0.25px;">Betreuer.Vorname</div>
<div style="position:absolute;left:541px;top:224px;width:439px;height:38px;background:#ffffff;"></div>
<div style="position:absolute;left:522px;top:224px;width:19px;height:1px;background:#000;"></div>
<div style="position:absolute;left:522px;top:225px;width:18px;height:37px;background:#e8ebef;box-shadow:inset 0 1px 0 #fafbfc;"></div>
<div style="position:absolute;left:540px;top:224px;width:1px;height:39px;background:#000;"></div>
<div style="position:absolute;left:522px;top:262px;width:19px;height:1px;background:#000;"></div>
<div style="position:absolute;left:548px;top:228px;width:153px;height:23px;border:1px solid #dbd9cd;background:#ffffff;"></div>
<div style="position:absolute;left:550.3px;top:231.65px;font-size:14px;line-height:14px;color:#1e2633;white-space:pre;letter-spacing:0.2px;">Anton</div>
<div style="position:absolute;left:714px;top:228px;width:153px;height:23px;border:1px solid #dbd9cd;background:#ffffff;"></div>
<div style="position:absolute;left:716.3px;top:231.65px;font-size:14px;line-height:14px;color:#1e2633;white-space:pre;letter-spacing:0.2px;">Testle</div>
<div style="position:absolute;left:870px;top:228px;width:131px;height:23px;border:1px solid #dbd9cd;background:#ffffff;"></div>
<div style="position:absolute;left:872.3px;top:231.65px;font-size:14px;line-height:14px;color:#1e2633;white-space:pre;letter-spacing:0.2px;">Fabian</div>
<svg style="position:absolute;left:530px;top:227px" width="7" height="11"><path d="M0 0 L6.2 5.5 L0 11Z" fill="#000"/></svg>
<div style="position:absolute;left:541px;top:263px;width:439px;height:37px;background:#f2f2f2;"></div>
<div style="position:absolute;left:522px;top:264px;width:18px;height:36px;background:#e8ebef;box-shadow:inset 0 1px 0 #fafbfc;"></div>
<div style="position:absolute;left:540px;top:263px;width:1px;height:38px;background:#000;"></div>
<div style="position:absolute;left:522px;top:300px;width:19px;height:1px;background:#000;"></div>
<div style="position:absolute;left:548px;top:266px;width:153px;height:23px;border:1px solid #dbd9cd;background:#f2f2f2;"></div>
<div style="position:absolute;left:550.3px;top:269.55px;font-size:14px;line-height:14px;color:#1e2633;white-space:pre;letter-spacing:0.2px;">Anton</div>
<div style="position:absolute;left:714px;top:266px;width:153px;height:23px;border:1px solid #dbd9cd;background:#f2f2f2;"></div>
<div style="position:absolute;left:716.3px;top:269.55px;font-size:14px;line-height:14px;color:#1e2633;white-space:pre;letter-spacing:0.2px;">Testle</div>
<div style="position:absolute;left:870px;top:266px;width:131px;height:23px;border:1px solid #dbd9cd;background:#f2f2f2;"></div>
<div style="position:absolute;left:872.3px;top:269.55px;font-size:14px;line-height:14px;color:#1e2633;white-space:pre;letter-spacing:0.2px;">Fabian</div>
<div style="position:absolute;left:541px;top:301px;width:439px;height:37px;background:#ffffff;"></div>
<div style="position:absolute;left:522px;top:302px;width:18px;height:36px;background:#e8ebef;box-shadow:inset 0 1px 0 #fafbfc;"></div>
<div style="position:absolute;left:540px;top:301px;width:1px;height:38px;background:#000;"></div>
<div style="position:absolute;left:522px;top:338px;width:19px;height:1px;background:#000;"></div>
<div style="position:absolute;left:548px;top:304px;width:153px;height:23px;border:1px solid #dbd9cd;background:#ffffff;"></div>
<div style="position:absolute;left:714px;top:304px;width:153px;height:23px;border:1px solid #dbd9cd;background:#ffffff;"></div>
<div style="position:absolute;left:870px;top:304px;width:131px;height:23px;border:1px solid #dbd9cd;background:#ffffff;"></div>
<svg style="position:absolute;left:527px;top:304px" width="11" height="11" viewBox="0 0 11 11"><path d="M5.4 0v8.8M1 4.4h8.8M2.2 1.2L8.6 7.6M2.2 7.6L8.6 1.2" stroke="#1a1a1a" stroke-width="1.1"/><circle cx="5.4" cy="4.4" r="1.3" fill="#1a1a1a"/></svg>
<div style="position:absolute;left:522px;top:425px;width:457px;height:20px;background:linear-gradient(#f5f5f5 0%,#f0f0f1 46%,#e3e5e8 47%,#e6e8eb 100%);border-top:1px solid #b4b6b9;"></div>
<div style="position:absolute;left:528px;top:429.97px;font-size:10.9px;line-height:10.9px;color:#5b6472;white-space:pre;">Datensatz:</div>
<svg style="position:absolute;left:587px;top:430px" width="16" height="12" viewBox="0 0 16 12"><rect x="1" y="1" width="1.3" height="7" fill="#3b404a"/><path d="M7 0.8 L2.8 4.5 L7 8.2Z" fill="#3b404a"/></svg>
<svg style="position:absolute;left:605px;top:430px" width="16" height="12" viewBox="0 0 16 12"><path d="M5 0.8 L0.8 4.5 L5 8.2Z" fill="#b9bcc1"/></svg>
<div style="position:absolute;left:616px;top:427px;width:50px;height:16px;background:#fff;border:1px solid #dcdcdc;"></div>
<div style="position:absolute;left:617.6px;top:430.09px;font-size:11px;line-height:11px;color:#000;white-space:pre;">1 von 2</div>
<svg style="position:absolute;left:675.0px;top:430px" width="16" height="12" viewBox="0 0 16 12"><path d="M0.6 0.8 L4.8 4.5 L0.6 8.2Z" fill="#3b404a"/></svg>
<svg style="position:absolute;left:691.0px;top:430px" width="16" height="12" viewBox="0 0 16 12"><path d="M0.6 0.8 L4.8 4.5 L0.6 8.2Z" fill="#3b404a"/><rect x="5" y="1" width="1.3" height="7" fill="#3b404a"/></svg>
<svg style="position:absolute;left:705.0px;top:430px" width="16" height="12" viewBox="0 0 16 12"><path d="M0.6 0.8 L4.8 4.5 L0.6 8.2Z" fill="#3b404a"/><rect x="5.4" y="0.8" width="7.2" height="7" fill="#fcf0a6"/><path d="M5.8 1.2h1.4v1.4h-1.4zM8.3 1.0h1.4v1.8h-1.4zM10.8 1.2h1.4v1.4h-1.4zM5.8 3.6h1.8v1.4h-1.8zM10.5 3.6h1.8v1.4h-1.8zM5.8 6.0h1.4v1.4h-1.4zM8.3 5.8h1.4v1.8h-1.4zM10.8 6.0h1.4v1.4h-1.4z" fill="#d8bc3a"/></svg>
<div style="position:absolute;left:723.2px;top:426px;width:1px;height:19px;background:#a7a9ad;box-shadow:1px 0 0 #fff;"></div>
<svg style="position:absolute;left:732.6px;top:429px" width="15" height="13" viewBox="0 0 15 13"><path d="M0.5 0.5 H10.5 L6.8 5 V10 L4.3 12 V5Z" fill="#c8cacd" stroke="#9a9da2" stroke-width="1"/><path d="M7.5 5.5 L13 11 M12.5 5 L7.5 10" stroke="#8e9196" stroke-width="1.6"/></svg>
<div style="position:absolute;left:750.0px;top:430.09px;font-size:11px;line-height:11px;color:#8f9297;white-space:pre;">Kein Filter</div>
<div style="position:absolute;left:810.0px;top:426px;width:1px;height:19px;background:#a7a9ad;box-shadow:1px 0 0 #fff;"></div>
<div style="position:absolute;left:816.0px;top:427px;width:70px;height:16px;background:#fff;border:1px solid #dcdcdc;"></div>
<div style="position:absolute;left:818.0px;top:430.09px;font-size:11px;line-height:11px;color:#000;white-space:pre;">Suchen</div>
<div style="position:absolute;left:522px;top:456.03px;font-size:10.6px;line-height:10.6px;color:#111;white-space:pre;">Betreuer-Kind mittags</div>
<div style="position:absolute;left:520px;top:469px;width:459px;height:2px;background:#63696f;border-top:1px solid #8c9095;"></div>
<div style="position:absolute;left:520px;top:469px;width:2px;height:208px;background:#63696f;border-left:1px solid #8c9095;"></div>
<div style="position:absolute;left:522px;top:471px;width:457px;height:67px;background:#c6d9f0;"></div>
<div style="position:absolute;left:979px;top:471px;width:1px;height:67px;background:#fff;"></div>
<div style="position:absolute;left:547px;top:479.68px;font-size:24px;line-height:24px;color:#5088c8;white-space:pre;letter-spacing:0.15px;">Betreuer-Kind mittags</div>
<div style="position:absolute;left:564px;top:518.42px;font-size:13.8px;line-height:13.8px;color:#6c9bd6;white-space:pre;letter-spacing:0.25px;">Kinder.Vorname</div>
<div style="position:absolute;left:704.5px;top:518.42px;font-size:13.8px;line-height:13.8px;color:#6c9bd6;white-space:pre;letter-spacing:0.25px;">Kinder.Name</div>
<div style="position:absolute;left:845.4px;top:518.42px;font-size:13.8px;line-height:13.8px;color:#6c9bd6;white-space:pre;letter-spacing:0.25px;">Betreuer.Vorname</div>
<div style="position:absolute;left:541px;top:538px;width:439px;height:30px;background:#ffffff;"></div>
<div style="position:absolute;left:522px;top:538px;width:19px;height:1px;background:#000;"></div>
<div style="position:absolute;left:522px;top:539px;width:18px;height:29px;background:#e8ebef;box-shadow:inset 0 1px 0 #fafbfc;"></div>
<div style="position:absolute;left:540px;top:538px;width:1px;height:31px;background:#000;"></div>
<div style="position:absolute;left:522px;top:568px;width:19px;height:1px;background:#000;"></div>
<div style="position:absolute;left:563px;top:542px;width:138px;height:23px;border:1px solid #dbd9cd;background:#ffffff;"></div>
<div style="position:absolute;left:565.3px;top:545.85px;font-size:14px;line-height:14px;color:#1e2633;white-space:pre;letter-spacing:0.2px;">Anton</div>
<div style="position:absolute;left:703px;top:542px;width:138px;height:23px;border:1px solid #dbd9cd;background:#ffffff;"></div>
<div style="position:absolute;left:705.3px;top:545.85px;font-size:14px;line-height:14px;color:#1e2633;white-space:pre;letter-spacing:0.2px;">Testle</div>
<div style="position:absolute;left:844px;top:542px;width:157px;height:23px;border:1px solid #dbd9cd;background:#ffffff;"></div>
<div style="position:absolute;left:846.3px;top:545.85px;font-size:14px;line-height:14px;color:#1e2633;white-space:pre;letter-spacing:0.2px;">Fabian</div>
<svg style="position:absolute;left:530px;top:541px" width="7" height="11"><path d="M0 0 L6.2 5.5 L0 11Z" fill="#000"/></svg>
<div style="position:absolute;left:541px;top:569px;width:439px;height:29px;background:#f2f2f2;"></div>
<div style="position:absolute;left:522px;top:570px;width:18px;height:28px;background:#e8ebef;box-shadow:inset 0 1px 0 #fafbfc;"></div>
<div style="position:absolute;left:540px;top:569px;width:1px;height:30px;background:#000;"></div>
<div style="position:absolute;left:522px;top:598px;width:19px;height:1px;background:#000;"></div>
<div style="position:absolute;left:563px;top:572px;width:138px;height:23px;border:1px solid #dbd9cd;background:#f2f2f2;"></div>
<div style="position:absolute;left:703px;top:572px;width:138px;height:23px;border:1px solid #dbd9cd;background:#f2f2f2;"></div>
<div style="position:absolute;left:844px;top:572px;width:157px;height:23px;border:1px solid #dbd9cd;background:#f2f2f2;"></div>
<svg style="position:absolute;left:527px;top:572px" width="11" height="11" viewBox="0 0 11 11"><path d="M5.4 0v8.8M1 4.4h8.8M2.2 1.2L8.6 7.6M2.2 7.6L8.6 1.2" stroke="#1a1a1a" stroke-width="1.1"/><circle cx="5.4" cy="4.4" r="1.3" fill="#1a1a1a"/></svg>
<div style="position:absolute;left:522px;top:657px;width:457px;height:20px;background:linear-gradient(#f5f5f5 0%,#f0f0f1 46%,#e3e5e8 47%,#e6e8eb 100%);border-top:1px solid #b4b6b9;"></div>
<div style="position:absolute;left:528px;top:661.97px;font-size:10.9px;line-height:10.9px;color:#5b6472;white-space:pre;">Datensatz:</div>
<svg style="position:absolute;left:587px;top:662px" width="16" height="12" viewBox="0 0 16 12"><rect x="1" y="1" width="1.3" height="7" fill="#3b404a"/><path d="M7 0.8 L2.8 4.5 L7 8.2Z" fill="#3b404a"/></svg>
<svg style="position:absolute;left:605px;top:662px" width="16" height="12" viewBox="0 0 16 12"><path d="M5 0.8 L0.8 4.5 L5 8.2Z" fill="#b9bcc1"/></svg>
<div style="position:absolute;left:616px;top:659px;width:50px;height:16px;background:#fff;border:1px solid #dcdcdc;"></div>
<div style="position:absolute;left:617.6px;top:662.09px;font-size:11px;line-height:11px;color:#000;white-space:pre;">1 von 1</div>
<svg style="position:absolute;left:675.0px;top:662px" width="16" height="12" viewBox="0 0 16 12"><path d="M0.6 0.8 L4.8 4.5 L0.6 8.2Z" fill="#3b404a"/></svg>
<svg style="position:absolute;left:691.0px;top:662px" width="16" height="12" viewBox="0 0 16 12"><path d="M0.6 0.8 L4.8 4.5 L0.6 8.2Z" fill="#3b404a"/><rect x="5" y="1" width="1.3" height="7" fill="#3b404a"/></svg>
<svg style="position:absolute;left:705.0px;top:662px" width="16" height="12" viewBox="0 0 16 12"><path d="M0.6 0.8 L4.8 4.5 L0.6 8.2Z" fill="#3b404a"/><rect x="5.4" y="0.8" width="7.2" height="7" fill="#fcf0a6"/><path d="M5.8 1.2h1.4v1.4h-1.4zM8.3 1.0h1.4v1.8h-1.4zM10.8 1.2h1.4v1.4h-1.4zM5.8 3.6h1.8v1.4h-1.8zM10.5 3.6h1.8v1.4h-1.8zM5.8 6.0h1.4v1.4h-1.4zM8.3 5.8h1.4v1.8h-1.4zM10.8 6.0h1.4v1.4h-1.4z" fill="#d8bc3a"/></svg>
<div style="position:absolute;left:723.2px;top:658px;width:1px;height:19px;background:#a7a9ad;box-shadow:1px 0 0 #fff;"></div>
<svg style="position:absolute;left:732.6px;top:661px" width="15" height="13" viewBox="0 0 15 13"><path d="M0.5 0.5 H10.5 L6.8 5 V10 L4.3 12 V5Z" fill="#c8cacd" stroke="#9a9da2" stroke-width="1"/><path d="M7.5 5.5 L13 11 M12.5 5 L7.5 10" stroke="#8e9196" stroke-width="1.6"/></svg>
<div style="position:absolute;left:750.0px;top:662.09px;font-size:11px;line-height:11px;color:#8f9297;white-space:pre;">Kein Filter</div>
<div style="position:absolute;left:810.0px;top:658px;width:1px;height:19px;background:#a7a9ad;box-shadow:1px 0 0 #fff;"></div>
<div style="position:absolute;left:816.0px;top:659px;width:70px;height:16px;background:#fff;border:1px solid #dcdcdc;"></div>
<div style="position:absolute;left:818.0px;top:662.09px;font-size:11px;line-height:11px;color:#000;white-space:pre;">Suchen</div>
<div style="position:absolute;left:518px;top:694.03px;font-size:10.6px;line-height:10.6px;color:#111;white-space:pre;">Bekifrei Abfrage</div>
<div style="position:absolute;left:516px;top:707px;width:464px;height:2px;background:#7f7f7f;"></div>
<div style="position:absolute;left:516px;top:707px;width:2px;height:40px;background:#7f7f7f;"></div>
<div style="position:absolute;left:518px;top:709px;width:460px;height:38px;background:#c6d9f0;"></div>
<div style="position:absolute;left:978px;top:709px;width:2px;height:38px;background:#fff;"></div>
<div style="position:absolute;left:542px;top:716.68px;font-size:24px;line-height:24px;color:#5088c8;white-space:pre;letter-spacing:0.15px;">Betreuer-Kind Freitag</div>
<div style="position:absolute;left:979px;top:51px;width:1px;height:96px;background:#dedede;"></div>
</body></html>
